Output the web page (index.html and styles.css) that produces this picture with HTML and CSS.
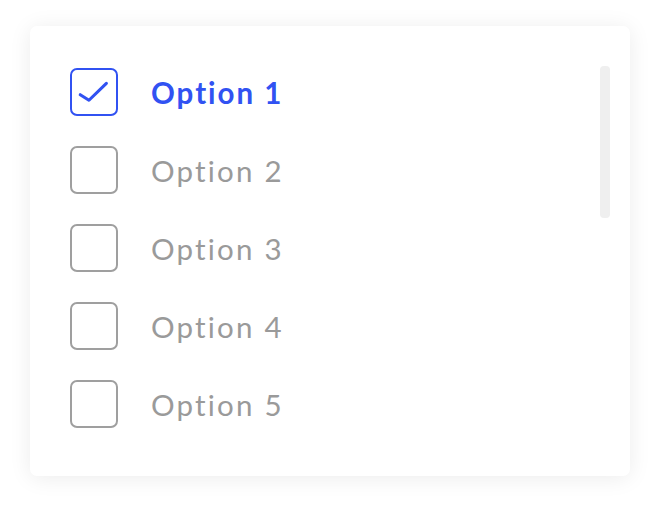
FILE: index.html
```html
<!DOCTYPE html>
<html>
<head>
<meta charset="utf-8">
<link rel="stylesheet" href="styles.css">
</head>
<body>
<div class="card">
  <ul class="list">
    <li class="item checked">
      <span class="box"><svg viewBox="0 0 48 48" width="44" height="44"><path d="M9 27 L18.5 33 L37.5 14.5" fill="none" stroke="#3152f2" stroke-width="3.4" stroke-linecap="round" stroke-linejoin="round"/></svg></span>
      <span class="label">Option 1</span>
    </li>
    <li class="item"><span class="box"></span><span class="label">Option 2</span></li>
    <li class="item"><span class="box"></span><span class="label">Option 3</span></li>
    <li class="item"><span class="box"></span><span class="label">Option 4</span></li>
    <li class="item"><span class="box"></span><span class="label">Option 5</span></li>
  </ul>
  <div class="scrollbar"></div>
</div>
</body>
</html>
```
FILE: styles.css
```css
html, body { margin: 0; padding: 0; background: #ffffff; }
body { padding: 26px 30px; font-family: Lato, "Noto Sans", sans-serif; }
.card {
  position: relative;
  width: 600px;
  height: 450px;
  box-sizing: border-box;
  background: #fff;
  border-radius: 7px;
  box-shadow: 0 2px 22px rgba(0,0,0,0.08);
  padding: 42px 40px 0 40px;
}
.list { list-style: none; margin: 0; padding: 0; display: flex; flex-direction: column; gap: 30px; }
.item { display: flex; align-items: center; gap: 33px; height: 48px; }
.box {
  width: 48px; height: 48px; box-sizing: border-box;
  border: 2px solid #9f9f9f; border-radius: 7px;
  display: flex; align-items: center; justify-content: center;
  flex: none;
}
.checked .box { border-color: #3152f2; }
.label { font-size: 29.5px; color: #9a9a9a; letter-spacing: 2.2px; line-height: 1; padding-top: 1px; }
.checked .label { color: #3152f2; font-weight: 700; letter-spacing: 2px; }
.scrollbar {
  position: absolute; top: 40px; right: 20px;
  width: 10px; height: 152px; border-radius: 4px; background: #efefef;
}
```
